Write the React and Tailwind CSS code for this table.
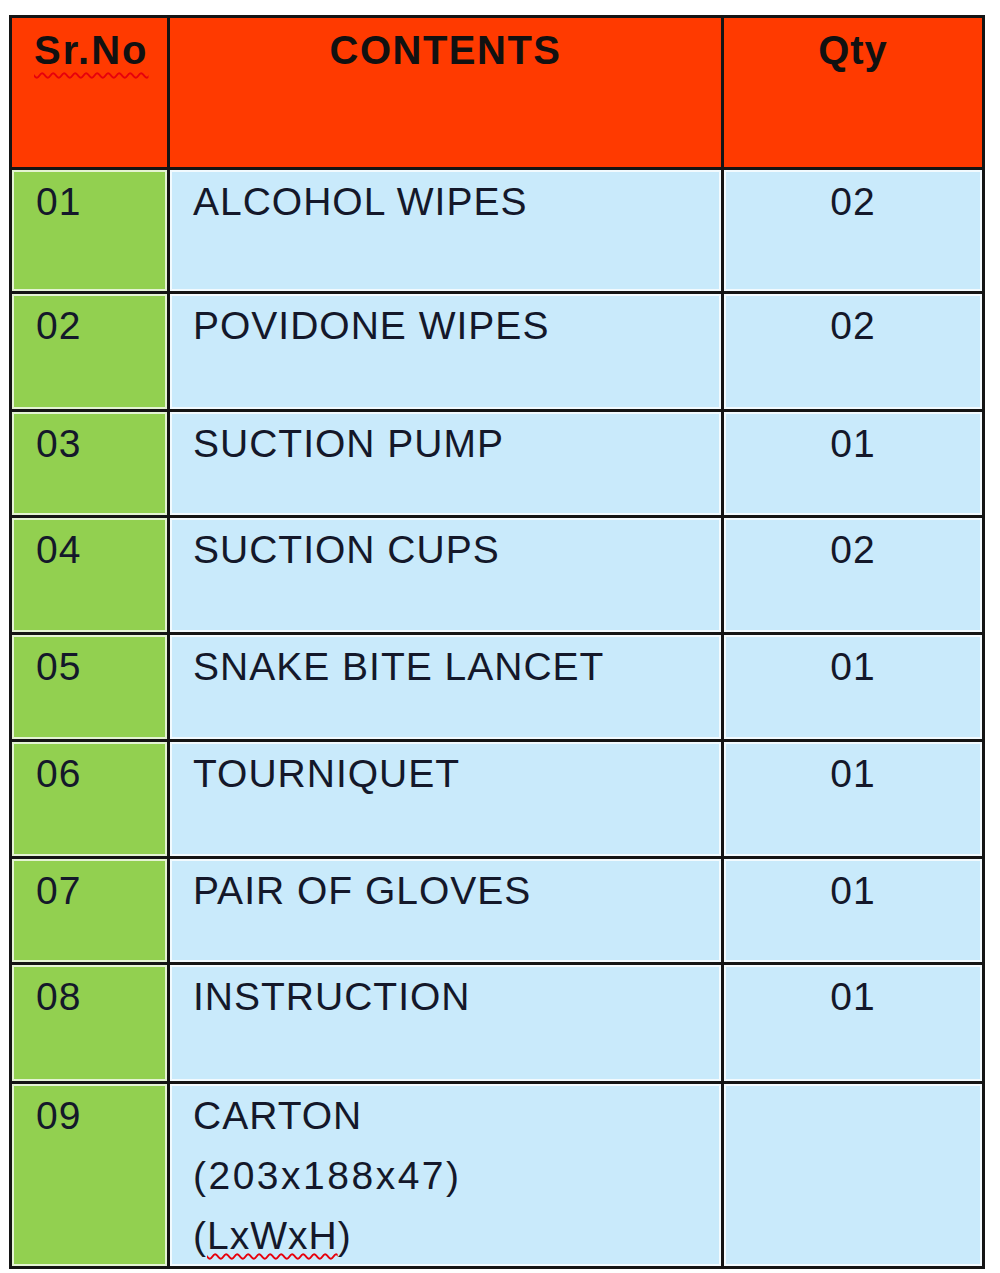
const rows = [
  { no: "01", item: ["ALCOHOL WIPES"], qty: "02", h: "h-[124px]" },
  { no: "02", item: ["POVIDONE WIPES"], qty: "02", h: "h-[118px]" },
  { no: "03", item: ["SUCTION PUMP"], qty: "01", h: "h-[106px]" },
  { no: "04", item: ["SUCTION CUPS"], qty: "02", h: "h-[117px]" },
  { no: "05", item: ["SNAKE BITE LANCET"], qty: "01", h: "h-[107px]" },
  { no: "06", item: ["TOURNIQUET"], qty: "01", h: "h-[117px]" },
  { no: "07", item: ["PAIR OF GLOVES"], qty: "01", h: "h-[106px]" },
  { no: "08", item: ["INSTRUCTION"], qty: "01", h: "h-[119px]" },
  { no: "09", item: ["CARTON", "(203x188x47)", "(LxWxH)"], qty: "", h: "h-[182px]" },
]

const cell = "border-[3px] border-[#141414] align-top"
const inner = "shadow-[inset_0_0_0_2px_rgba(255,255,255,0.75)]"

export default function App() {
  return (
    <div className="min-h-[1273px] bg-white pt-[15px] pl-[9px] font-['Liberation_Sans',Arial,sans-serif]">
      <table className="w-[976px] table-fixed border-collapse border-[3px] border-[#141414] text-[39px] leading-[60px] text-[#14182a]">
        <colgroup>
          <col className="w-[158px]" />
          <col className="w-[554px]" />
          <col />
        </colgroup>
        <thead>
          <tr className="h-[152px] bg-[#ff3a00] font-bold text-[#111]">
            <th className={`${cell} pl-[22px] pt-[2px] text-left text-[40px] tracking-[2px]`}>
              <span className="underline decoration-red-600 decoration-wavy decoration-[1.5px] underline-offset-[8px]">Sr.No</span>
            </th>
            <th className={`${cell} pt-[2px] text-center text-[40px] tracking-[1.5px]`}>CONTENTS</th>
            <th className={`${cell} pt-[2px] text-center text-[40px] tracking-[1px]`}>Qty</th>
          </tr>
        </thead>
        <tbody>
          {rows.map((r) => (
            <tr key={r.no} className={r.h}>
              <td className={`${cell} ${inner} bg-[#92d050] pl-[24px] pt-[2px] tracking-[1px]`}>{r.no}</td>
              <td className={`${cell} ${inner} bg-[#c9eafb] pl-[23px] pt-[2px] tracking-[1px]`}>
                {r.item.map((line) => (
                  <div key={line} className={line.startsWith("(2") ? "tracking-[2.5px]" : ""}>
                    {line === "(LxWxH)" ? (
                      <span>
                        (<span className="underline decoration-red-600 decoration-wavy decoration-[1.5px] underline-offset-[4px]">LxWxH</span>)
                      </span>
                    ) : (
                      line
                    )}
                  </div>
                ))}
              </td>
              <td className={`${cell} ${inner} bg-[#c9eafb] pt-[2px] text-center tracking-[1px]`}>{r.qty}</td>
            </tr>
          ))}
        </tbody>
      </table>
    </div>
  )
}
